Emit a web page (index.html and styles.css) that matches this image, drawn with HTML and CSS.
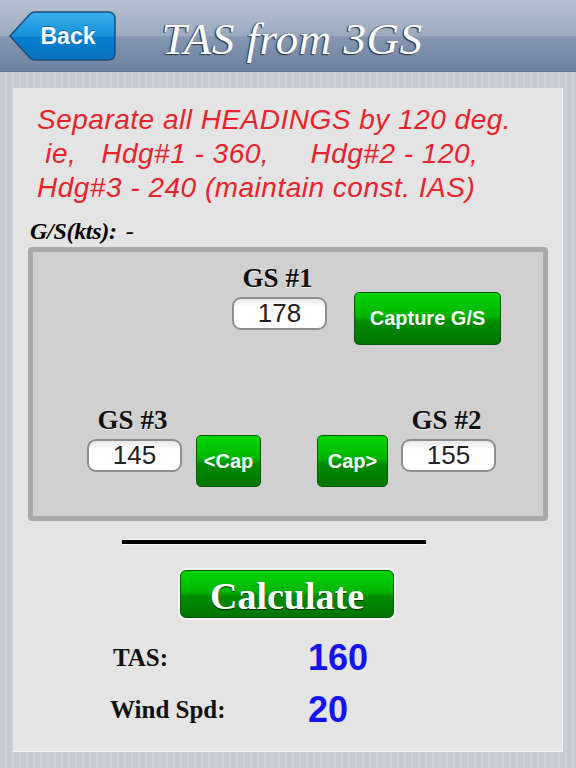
FILE: index.html
```html
<!DOCTYPE html>
<html lang="en">
<head>
    <meta charset="UTF-8">
    <meta name="viewport" content="width=device-width, initial-scale=1.0">
    <title>TAS from 3GS</title>
    <link rel="stylesheet" href="styles.css">
</head>
<body>
    <header class="navbar">
        <a class="back-btn" href="#">
            <svg class="back-shape" width="108" height="50" viewBox="0 0 108 50">
                <defs>
                    <linearGradient id="backFill" x1="0" y1="0" x2="0" y2="1">
                        <stop offset="0" stop-color="#3aaeec"/>
                        <stop offset="0.5" stop-color="#1591da"/>
                        <stop offset="0.52" stop-color="#0680cf"/>
                        <stop offset="1" stop-color="#0a72bd"/>
                    </linearGradient>
                </defs>
                <path d="M2 25 L22 3 Q24 1 27 1 H100 Q107 1 107 8 V42 Q107 49 100 49 H27 Q24 49 22 47 Z"
                      fill="url(#backFill)" stroke="#1d4e7c" stroke-width="1.5"/>
            </svg>
            <span class="back-text">Back</span>
        </a>
        <h1 class="title">TAS from 3GS</h1>
        <div></div>
    </header>

    <main class="page">
        <div class="panel">
            <p class="instructions">Separate all HEADINGS by 120 deg.
 ie,   Hdg#1 - 360,     Hdg#2 - 120,
Hdg#3 - 240 (maintain const. IAS)</p>

            <div class="gs-readout">
                <span class="gs-label">G/S(kts):</span>
                <span class="gs-value">-</span>
            </div>

            <div class="capture-box">
                <div class="row row-top">
                    <div class="gs-group">
                        <label for="gs1">GS #1</label>
                        <input id="gs1" type="text" value="178">
                    </div>
                    <button class="btn-green btn-capture">Capture G/S</button>
                </div>
                <div class="row row-bottom">
                    <div class="gs-group">
                        <label for="gs3">GS #3</label>
                        <input id="gs3" type="text" value="145">
                    </div>
                    <button class="btn-green btn-cap btn-cap-left">&lt;Cap</button>
                    <button class="btn-green btn-cap btn-cap-right">Cap&gt;</button>
                    <div class="gs-group gs-group-right">
                        <label for="gs2">GS #2</label>
                        <input id="gs2" type="text" value="155">
                    </div>
                </div>
            </div>

            <hr class="divider">

            <button class="btn-green btn-calc">Calculate</button>

            <div class="results">
                <span class="result-label">TAS:</span>
                <span class="result-value">160</span>
                <span class="result-label result-label-wind">Wind Spd:</span>
                <span class="result-value">20</span>
            </div>
        </div>
    </main>
</body>
</html>
```

FILE: styles.css
```css
body {
    margin: 0;
    width: 576px;
    height: 768px;
    overflow: hidden;
    font-family: "Liberation Sans", Arial, sans-serif;
    background: repeating-linear-gradient(90deg, #c5ccd4 0, #c5ccd4 5px, #cdd3da 5px, #cdd3da 7px);
}
.navbar {
    height: 72px;
    display: grid;
    grid-template-columns: 1fr auto 1fr;
    align-items: center;
    padding-left: 8px;
    box-sizing: border-box;
    background: linear-gradient(#b8c3d2, #9aaabf 50%, #8597b0 52%, #6c82a0);
    border-bottom: 1px solid #5d7190;
}
.back-btn {
    position: relative;
    width: 108px;
    height: 50px;
    display: flex;
    align-items: center;
    justify-content: center;
    padding-left: 12px;
    padding-top: 2px;
    box-sizing: border-box;
    text-decoration: none;
}
.back-shape {
    position: absolute;
    left: 0;
    top: 0;
}
.back-text {
    position: relative;
    color: #fff;
    font-weight: bold;
    font-size: 23px;
    text-shadow: 0 -1px 0 rgba(0, 0, 0, 0.35);
}
.title {
    margin: 6px 0 0 0;
    font-family: "Liberation Serif", "Times New Roman", serif;
    font-style: italic;
    font-weight: normal;
    font-size: 45px;
    color: #fff;
    letter-spacing: 0.5px;
    text-shadow: -1px 1px 1px #2e3642, -1px 0 1px #4a5566;
}
.page {
    padding: 16px 13px 0 13px;
}
.panel {
    width: 550px;
    height: 664px;
    box-sizing: border-box;
    background: #e4e4e4;
    padding-top: 15px;
    border-right: 1px solid #f2f2f2;
    border-bottom: 1px solid #f2f2f2;
}
.instructions {
    margin: 0 0 0 24px;
    white-space: pre;
    font-style: italic;
    font-size: 28px;
    line-height: 34px;
    letter-spacing: 0.5px;
    color: #e8232b;
}
.gs-readout {
    margin: 14px 0 0 17px;
    height: 24px;
    line-height: 24px;
    font-family: "Liberation Serif", "Times New Roman", serif;
    font-size: 24px;
}
.gs-label {
    font-weight: bold;
    font-style: italic;
    letter-spacing: -0.3px;
}
.gs-value {
    margin-left: 3px;
}
.capture-box {
    margin: 4px 0 0 15px;
    width: 520px;
    height: 274px;
    box-sizing: border-box;
    border: 5px solid #a9a9a9;
    border-radius: 4px;
    background: #d0d0d0;
    padding-top: 12px;
}
.row {
    display: flex;
    align-items: flex-start;
}
.row-top {
    padding-left: 199px;
}
.row-bottom {
    margin-top: 61px;
    padding-left: 54px;
}
.gs-group {
    width: 95px;
    display: flex;
    flex-direction: column;
    align-items: center;
}
.gs-group label {
    font-family: "Liberation Serif", "Times New Roman", serif;
    font-weight: bold;
    font-size: 27px;
    line-height: 28px;
    color: #111;
    margin-right: 4px;
    text-shadow: 0 1px 0 #eee;
}
.gs-group input {
    margin-top: 5px;
    width: 95px;
    height: 33px;
    box-sizing: border-box;
    border: 2px solid #8e8e8e;
    border-radius: 9px;
    background: linear-gradient(#e8e8e8, #fff 30%);
    text-align: center;
    font-family: "Liberation Sans", Arial, sans-serif;
    font-size: 26px;
    color: #222;
    padding: 0;
}
.btn-green {
    border: 1px solid #005f00;
    border-radius: 5px;
    color: #fff;
    font-family: "Liberation Sans", Arial, sans-serif;
    font-weight: bold;
    background: linear-gradient(#06d406, #00b400 45%, #008c00 55%, #007400);
    padding: 0;
    cursor: pointer;
}
.btn-capture {
    margin: 28px 0 0 27px;
    width: 147px;
    height: 53px;
    font-size: 20px;
}
.btn-cap {
    margin-top: 29px;
    height: 52px;
    font-size: 20px;
}
.btn-cap-left {
    margin-left: 14px;
    width: 65px;
}
.btn-cap-right {
    margin-left: 56px;
    width: 71px;
}
.gs-group-right {
    margin-left: 13px;
}
.divider {
    margin: 19px 0 0 109px;
    width: 304px;
    height: 4px;
    border: none;
    background: #000;
    box-shadow: 0 1px 0 #fafafa, 0 -1px 0 #fafafa;
}
.btn-calc {
    display: block;
    margin: 26px 0 0 167px;
    width: 214px;
    height: 48px;
    border-radius: 6px;
    font-family: "Liberation Serif", "Times New Roman", serif;
    font-size: 38px;
    padding-top: 3px;
    text-shadow: 0 1px 1px #003000;
    box-shadow: 0 0 0 2px #f4f4f4;
}
.results {
    margin: 14px 0 0 97px;
    display: grid;
    grid-template-columns: 198px auto;
    grid-auto-rows: 52px;
    align-items: center;
}
.result-label {
    font-family: "Liberation Serif", "Times New Roman", serif;
    font-weight: bold;
    font-size: 25px;
    color: #111;
    margin-left: 3px;
}
.result-label-wind {
    margin-left: 0;
}
.result-value {
    font-weight: bold;
    font-size: 36px;
    color: #1414f0;
}
```
